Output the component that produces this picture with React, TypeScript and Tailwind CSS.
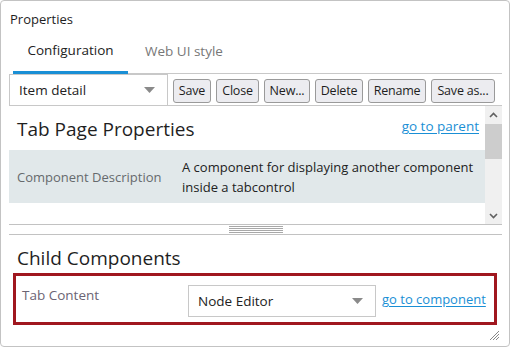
import React from 'react';

const font = { fontFamily: '"Open Sans", "Noto Sans", sans-serif' };

const Caret = () => (
  <svg width="11" height="6" viewBox="0 0 11 6" className="shrink-0">
    <path d="M0 0 L11 0 L5.5 6 Z" fill="#8a8a8a" />
  </svg>
);

const ToolButton = ({ label, w }: { label: string; w: string }) => (
  <button
    className={`${w} shrink-0 whitespace-nowrap h-[24px] rounded-[3px] border border-[#9a9a9a] bg-[#ececf0] text-[12.5px] leading-[20px] text-[#1e1e1e] tracking-[-0.2px]`}
  >
    {label}
  </button>
);

export default function App() {
  return (
    <div className="w-[511px] h-[348px] bg-white text-[#222]" style={font}>
      <div className="relative w-[510px] h-[347px] border border-[#c3c3c3] rounded-[4px] bg-white flex flex-col pl-2 pr-[7px]">
        {/* title */}
        <div className="pt-[9px] pl-px text-[13px] leading-[18px] text-[#1e1e1e]">Properties</div>

        {/* tabs */}
        <div className="ml-1 mt-[2px] flex items-end border-b border-[#c8c8c8] h-[44px]">
          <div className="-mb-px w-[115px] h-[44px] flex items-center justify-center border-b-[3px] border-[#1a8fd5] text-[13.5px] text-[#222]">
            Configuration
          </div>
          <div className="h-[43px] flex items-center pl-[17px] text-[13.5px] text-[#777]">Web UI style</div>
        </div>

        {/* toolbar */}
        <div className="flex items-start h-[32px] border-b border-[#c8c8c8]">
          <div className="w-[159px] shrink-0 h-[32px] border border-[#c8c8c8] flex items-center justify-between pl-[9px] pr-[12px] text-[13.5px] text-[#222] bg-white">
            <span>Item detail</span>
            <Caret />
          </div>
          <div className="flex gap-[5px] pt-[5px] pl-[5px]">
            <ToolButton label="Save" w="w-[38px]" />
            <ToolButton label="Close" w="w-[43px]" />
            <ToolButton label="New..." w="w-[46px]" />
            <ToolButton label="Delete" w="w-[48px]" />
            <ToolButton label="Rename" w="w-[58px]" />
            <ToolButton label="Save as..." w="w-[64px]" />
          </div>
        </div>

        {/* properties panel */}
        <div className="flex h-[118px] overflow-hidden">
          <div className="flex-1 flex flex-col">
            <div className="h-[44px] flex items-center justify-between pl-[8px] pr-[6px]">
              <span className="text-[19px] leading-[24px] text-[#1f1f1f] pt-[2px]">Tab Page Properties</span>
              <a href="#" className="text-[13.5px] text-[#1a8fd5] underline underline-offset-2 self-start pt-[10px]">
                go to parent
              </a>
            </div>
            <div className="h-[53px] bg-[#e1e8ea] flex items-center">
              <div className="w-[173px] shrink-0 pl-[8px] pt-[2px] text-[13px] text-[#666a6d]">Component Description</div>
              <div className="flex-1 text-[13px] leading-[20px] text-[#222]">
                A component for displaying another component
                <br />
                inside a tabcontrol
              </div>
            </div>
          </div>
          <div className="w-[17px] bg-[#f0f0f0] flex flex-col items-center">
            <div className="h-[17px] flex items-center justify-center">
              <svg width="9" height="6" viewBox="0 0 9 6">
                <path d="M1 5 L4.5 1.5 L8 5" fill="none" stroke="#606060" strokeWidth="1.6" />
              </svg>
            </div>
            <div className="mt-px w-full h-[35px] bg-[#cdcdcd]" />
            <div className="flex-1" />
            <div className="h-[17px] flex items-center justify-center">
              <svg width="9" height="6" viewBox="0 0 9 6">
                <path d="M1 1 L4.5 4.5 L8 1" fill="none" stroke="#606060" strokeWidth="1.6" />
              </svg>
            </div>
          </div>
        </div>

        {/* splitter */}
        <div className="h-[11px] border-y border-[#c2c2c2] flex items-center justify-center">
          <div className="w-[54px] flex flex-col gap-px">
            <div className="h-px bg-[#a8a8a8]" />
            <div className="h-px bg-[#a8a8a8]" />
            <div className="h-px bg-[#a8a8a8]" />
            <div className="h-px bg-[#a8a8a8]" />
          </div>
        </div>

        {/* child components */}
        <div className="pt-[11px] pl-[8px] text-[19px] leading-[24px] text-[#1f1f1f]">Child Components</div>
        <div className="ml-1 mt-[3px] w-[484px] h-[52px] border-[3px] border-[#a0171f] flex items-start pl-[6px]">
          <div className="w-[166px] shrink-0 pt-[9px] text-[13.5px] leading-[20px] text-[#6b6474]">Tab Content</div>
          <div className="mt-[9px] w-[188px] shrink-0 h-[32px] border border-[#c8c8c8] flex items-center justify-between pl-[9px] pr-[12px] text-[13.5px] text-[#222]">
            <span>Node Editor</span>
            <Caret />
          </div>
          <a href="#" className="ml-[6px] mt-[14px] whitespace-nowrap text-[13px] leading-[18px] text-[#1a8fd5] underline underline-offset-2">
            go to component
          </a>
        </div>

        {/* resize grip */}
        <svg width="11" height="11" viewBox="0 0 11 11" className="absolute right-[9px] bottom-[5px]">
          <path d="M10 1 L1 10 M10 4 L4 10 M10 7 L7 10" stroke="#888" strokeWidth="1" />
        </svg>
      </div>
    </div>
  );
}
